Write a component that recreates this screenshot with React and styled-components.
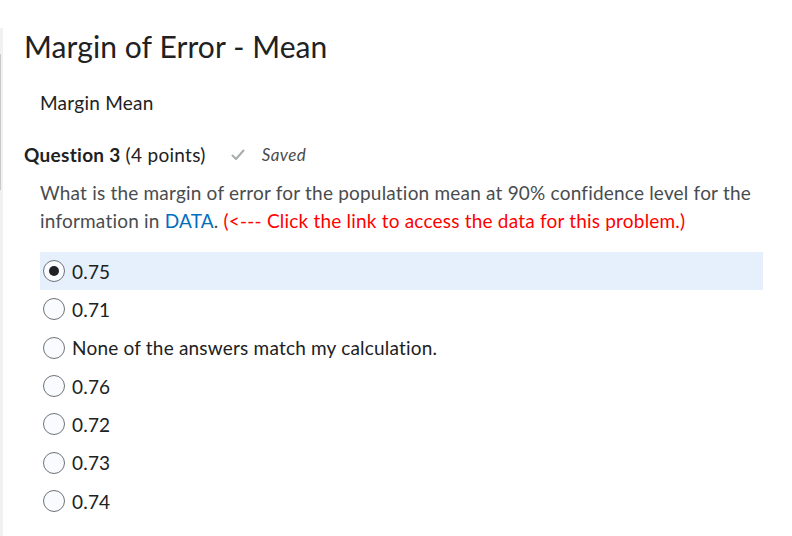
import React from 'react';
import styled, { createGlobalStyle } from 'styled-components';

const GlobalStyle = createGlobalStyle`
  html, body {
    margin: 0;
    padding: 0;
    background: #fff;
  }
  body {
    font-family: Lato, "Open Sans", sans-serif;
    color: #202122;
  }
`;

const Page = styled.div`
  width: 792px;
  height: 536px;
  padding-top: 28px;
  box-sizing: border-box;
  overflow: hidden;
`;

const Frame = styled.div`
  height: 100%;
  border-left: 3px solid #f1f1f2;
  position: relative;
  padding: 0 0 0 21px;
  box-sizing: border-box;

  &::before {
    content: '';
    position: absolute;
    left: -3px;
    top: 26px;
    width: 1px;
    height: 136px;
    background: #c8c9ca;
  }
`;

const Title = styled.h1`
  margin: 0;
  font-size: 30px;
  font-weight: 400;
  line-height: 36px;
  letter-spacing: 0.1px;
  color: #202122;
`;

const Subtitle = styled.p`
  margin: 25px 0 0 16px;
  font-size: 19px;
  line-height: 28px;
  letter-spacing: 0.25px;
  color: #202122;
`;

const QuestionHead = styled.div`
  display: flex;
  align-items: center;
  margin-top: 24px;
  font-size: 19px;
  line-height: 28px;
  letter-spacing: 0.3px;
`;

const Bold = styled.strong`
  font-weight: 700;
`;

const Points = styled.span`
  color: #202122;
  margin-left: 5px;
`;

const SavedTag = styled.span`
  display: inline-flex;
  align-items: center;
  margin-left: 25px;
  gap: 17px;
  font-size: 17px;
  font-style: italic;
  letter-spacing: 0.4px;
  color: #494c4e;
`;

const Prompt = styled.p`
  margin: 10px 0 0 16px;
  font-size: 19px;
  line-height: 28px;
  letter-spacing: 0.2px;
  color: #494c4e;
  max-width: 728px;
`;

const Link = styled.span`
  color: #006fbf;
`;

const Note = styled.span`
  color: #ff0000;
`;

const Options = styled.div`
  margin: 17px 0 0 16px;
  width: 723px;
  display: flex;
  flex-direction: column;
`;

const Option = styled.label`
  display: flex;
  align-items: center;
  height: 38.33px;
  padding-left: 3px;
  background: ${(p) => (p.$selected ? '#e6f0fc' : 'transparent')};
  font-size: 19px;
  letter-spacing: 0.2px;
  color: #202122;
`;

const Radio = styled.span`
  width: 20px;
  height: 20px;
  border-radius: 50%;
  border: 1px solid #6e7477;
  background: #f9fbff;
  display: flex;
  align-items: center;
  justify-content: center;
  margin-right: 7px;
  box-sizing: content-box;
  flex-shrink: 0;

  &::after {
    content: '';
    display: ${(p) => (p.$checked ? 'block' : 'none')};
    width: 10px;
    height: 10px;
    border-radius: 50%;
    background: #202122;
  }
`;

const Check = () => (
  <svg width="14" height="12" viewBox="0 0 14 12">
    <path d="M1.5 6.5 L5 10 L12.5 1.5" fill="none" stroke="#a8abad" strokeWidth="2" strokeLinecap="round" strokeLinejoin="round" />
  </svg>
);

const answers = ['0.75', '0.71', 'None of the answers match my calculation.', '0.76', '0.72', '0.73', '0.74'];

export default function App() {
  return (
    <Page>
      <GlobalStyle />
      <Frame>
        <Title>Margin of Error - Mean</Title>
        <Subtitle>Margin Mean</Subtitle>
        <QuestionHead>
          <Bold>Question 3</Bold>
          <Points>(4 points)</Points>
          <SavedTag>
            <Check />
            Saved
          </SavedTag>
        </QuestionHead>
        <Prompt>
          What is the margin of error for the population mean at 90% confidence level for the information in{' '}
          <Link>DATA</Link>. <Note>(&lt;--- Click the link to access the data for this problem.)</Note>
        </Prompt>
        <Options>
          {answers.map((a, i) => (
            <Option key={a} $selected={i === 0}>
              <Radio $checked={i === 0} />
              {a}
            </Option>
          ))}
        </Options>
      </Frame>
    </Page>
  );
}
